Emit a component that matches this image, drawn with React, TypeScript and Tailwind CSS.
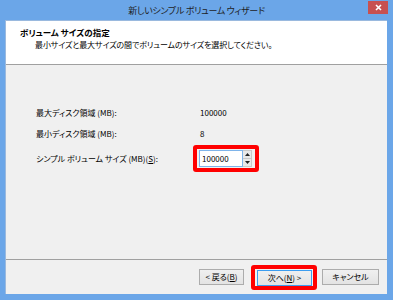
export default function App() {
  const font = {
    fontFamily: '"Noto Sans CJK JP", "Noto Sans", sans-serif',
  };

  return (
    <div
      className="w-[393px] h-[300px] bg-[#6ba6e8] flex flex-col text-black [font-feature-settings:'palt'] overflow-hidden"
      style={font}
    >
      {/* title bar */}
      <div className="relative h-[20px] flex items-center justify-center shrink-0">
        <span className="text-[9px] tracking-[-0.3px] leading-none text-[#1e1e1e] pt-[1px]">
          新しいシンプル ボリューム ウィザード
        </span>
        <div className="absolute right-[5px] top-[1px] w-[20px] h-[13px] bg-[#c75050] flex items-center justify-center">
          <svg width="7" height="7" viewBox="0 0 7 7">
            <path d="M1 1L6 6M6 1L1 6" stroke="#ffffff" strokeWidth="1.6" />
          </svg>
        </div>
      </div>

      {/* client */}
      <div className="flex-1 ml-[5px] mr-[6px] mb-[6px] flex flex-col bg-[#f0f0f0] border-t border-l border-[#9ab9de]">
        {/* header */}
        <div className="h-[44px] bg-white border-b border-[#a0a0a0] shrink-0 pl-[14px] pt-[6px]">
          <div className="text-[8.5px] leading-[11px] font-bold">
            ボリューム サイズの指定
          </div>
          <div className="text-[8px] tracking-[-0.1px] leading-[11px] pl-[15px] mt-[1px]">
            最小サイズと最大サイズの間でボリュームのサイズを選択してください。
          </div>
        </div>

        {/* body */}
        <div className="flex-1 pt-[41px] pl-[30px] text-[8px]">
          <div className="flex items-center h-[14px]">
            <span className="w-[164px]">最大ディスク領域 (MB):</span>
            <span>100000</span>
          </div>
          <div className="flex items-center h-[14px] mt-[7px]">
            <span className="w-[164px]">最小ディスク領域 (MB):</span>
            <span>8</span>
          </div>
          <div className="flex items-center mt-[4px]">
            <span className="w-[164px]">
              シンプル ボリューム サイズ (MB)(<span className="underline">S</span>):
            </span>
            <div className="-ml-[7px] border-[4px] border-[#ff0000] rounded-[3px] pl-[2px] pr-[3px] py-[1px]">
              <div className="flex h-[17px] w-[53px]">
                <div className="flex-1 bg-white border border-[#7eb4ea] flex items-center pl-[2px]">
                  100000
                </div>
                <div className="w-[9px] flex flex-col border border-l-0 border-[#c8c8c8] bg-[#f4f4f4]">
                  <div className="flex-1 flex items-center justify-center border-b border-[#c8c8c8] bg-[#e8e8e8]">
                    <svg width="5" height="3" viewBox="0 0 5 3">
                      <path d="M0 3L2.5 0L5 3Z" fill="#222" />
                    </svg>
                  </div>
                  <div className="flex-1 flex items-center justify-center bg-[#e8e8e8]">
                    <svg width="5" height="3" viewBox="0 0 5 3">
                      <path d="M0 0L2.5 3L5 0Z" fill="#222" />
                    </svg>
                  </div>
                </div>
              </div>
            </div>
          </div>
        </div>

        {/* footer */}
        <div className="h-[35px] shrink-0 border-t border-[#a0a0a0] flex items-center justify-end pr-[8px] text-[8px]">
          <button className="w-[45px] h-[16px] border border-[#acacac] bg-gradient-to-b from-[#f0f0f0] to-[#e3e3e3] flex items-center justify-center leading-none">
            &lt; 戻る(<span className="underline">B</span>)
          </button>
          <div className="ml-[7px] border-[4px] border-[#ff0000] rounded-[3px] pl-[2px] pr-[1px] pt-[1px]">
            <button className="w-[55px] h-[16px] border border-[#3c9df0] bg-gradient-to-b from-[#f0f0f0] to-[#e3e3e3] flex items-center justify-center leading-none">
              次へ(<span className="underline">N</span>) &gt;
            </button>
          </div>
          <button className="ml-[5px] w-[57px] h-[16px] border border-[#acacac] bg-gradient-to-b from-[#f0f0f0] to-[#e3e3e3] flex items-center justify-center leading-none">
            キャンセル
          </button>
        </div>
      </div>
    </div>
  );
}
